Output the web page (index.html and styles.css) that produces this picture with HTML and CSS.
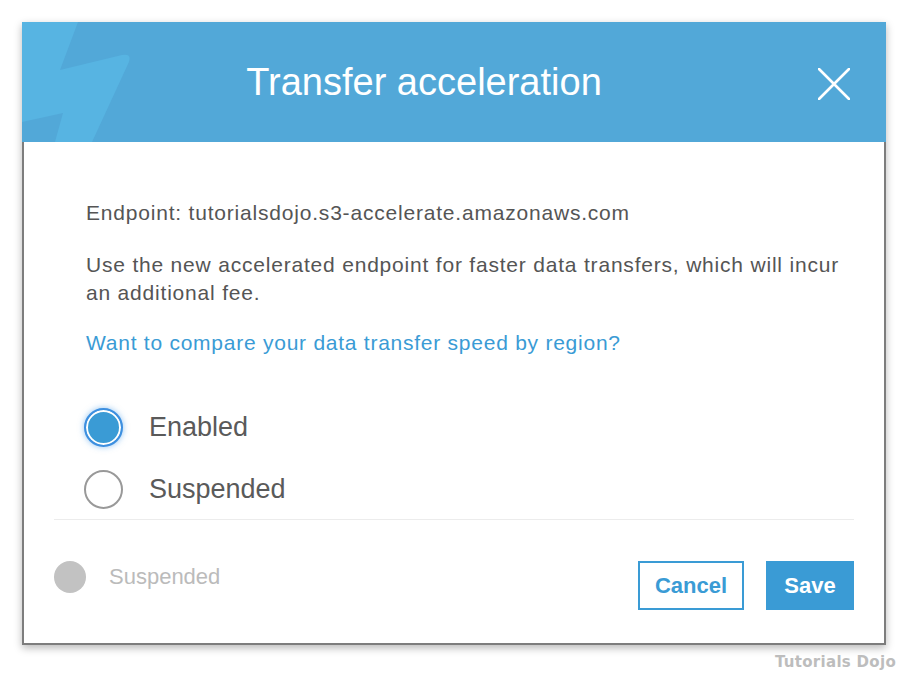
FILE: index.html
```html
<!DOCTYPE html>
<html>
<head>
<meta charset="utf-8">
<link rel="stylesheet" href="styles.css">
</head>
<body>
<div class="dialog">
  <header class="hdr">
    <svg class="bolt" width="120" height="120" viewBox="0 0 120 120"><path d="M0 0 H56 L38 48 L100 33 Q111 31 106 42 L70 120 H33 L41 91 L0 100 Z" fill="#57b4e2"/></svg>
    <h1 class="title">Transfer acceleration</h1>
    <button class="close" aria-label="Close"><svg width="32" height="32" viewBox="0 0 32 32"><path d="M1 1 L31 31 M31 1 L1 31" stroke="#fff" stroke-width="2.6" stroke-linecap="round"/></svg></button>
  </header>
  <div class="body">
    <div class="content">
      <p class="endpoint">Endpoint: tutorialsdojo.s3-accelerate.amazonaws.com</p>
      <p class="desc">Use the new accelerated endpoint for faster data transfers, which will incur an additional fee.</p>
      <a class="link" href="#">Want to compare your data transfer speed by region?</a>
      <div class="radios">
        <label class="radio"><span class="dot dot-on"></span><span class="rlabel">Enabled</span></label>
        <label class="radio"><span class="dot"></span><span class="rlabel">Suspended</span></label>
      </div>
    </div>
    <div class="sep"></div>
    <div class="footer">
      <div class="status"><span class="gdot"></span><span class="slabel">Suspended</span></div>
      <div class="actions">
        <button class="btn btn-cancel">Cancel</button>
        <button class="btn btn-save">Save</button>
      </div>
    </div>
  </div>
</div>
<div class="watermark">Tutorials Dojo</div>
</body>
</html>
```
FILE: styles.css
```css
html, body { margin: 0; padding: 0; background: #fff; }
body { font-family: "Liberation Sans", Arial, sans-serif; }
.dialog {
  margin: 22px 0 0 22px;
  width: 864px;
  box-shadow: 0 3px 8px rgba(0,0,0,0.28);
}
.hdr {
  position: relative;
  height: 120px;
  background: #52a8d8;
  display: flex;
  align-items: center;
  padding: 0 36px 0 8px;
  box-sizing: border-box;
  overflow: hidden;
}
.bolt { position: absolute; left: 0; top: 0; }
.title {
  position: relative;
  flex: 1;
  margin: 0;
  text-align: center;
  color: #fff;
  font-weight: normal;
  font-size: 38px;
  line-height: 44px;
}
.close {
  width: 32px; height: 32px; padding: 0; border: 0; background: none;
  display: block; margin-top: 4px;
}
.close svg { display: block; }
.body {
  border: 2px solid #7d7d7d;
  border-top: 0;
  padding: 0 30px 33px;
}
.content { padding: 57px 8px 0 32px; }
.endpoint, .desc {
  margin: 0;
  font-size: 21px;
  line-height: 28px;
  color: #555;
  letter-spacing: 0.8px;
}
.desc { margin-top: 24px; }
.link {
  display: block;
  margin-top: 22px;
  font-size: 21px;
  line-height: 28px;
  color: #3a9bd5;
  text-decoration: none;
  letter-spacing: 0.75px;
}
.radios { margin-top: 51px; display: flex; flex-direction: column; gap: 23px; }
.radio { display: flex; align-items: center; gap: 26px; margin-left: -2px; }
.dot {
  width: 39px; height: 39px; box-sizing: border-box;
  border-radius: 50%;
  border: 2px solid #999;
  background: #fff;
}
.dot-on {
  border: 2px solid #3d8fe0;
  background: #3a9bd5;
  box-shadow: inset 0 0 0 2px #fff, 0 0 6px rgba(60,150,230,0.55);
}
.rlabel { font-size: 27px; color: #5a5a5a; line-height: 39px; }
.sep { height: 1px; background: #ececec; margin-top: 10px; }
.footer {
  display: flex; justify-content: space-between; align-items: flex-start;
  padding-top: 41px;
}
.status { display: flex; align-items: center; gap: 23px; }
.gdot { width: 32px; height: 32px; border-radius: 50%; background: #c2c2c2; }
.slabel { font-size: 22px; color: #bbb; }
.actions { display: flex; gap: 22px; }
.btn {
  height: 49px;
  font-family: "Liberation Sans", Arial, sans-serif;
  font-weight: bold;
  font-size: 22px;
  box-sizing: border-box;
  padding: 0;
  cursor: pointer;
}
.btn-cancel { width: 106px; border: 2px solid #3a9bd5; background: #fff; color: #3a9bd5; }
.btn-save { width: 88px; border: 0; background: #3a9bd5; color: #fff; }
.watermark {
  text-align: right;
  padding-right: 14px;
  margin-top: 8px;
  font-family: "DejaVu Sans", Verdana, sans-serif;
  font-weight: bold;
  font-size: 15px;
  letter-spacing: 0.3px;
  color: #bdbdbd;
}
```
